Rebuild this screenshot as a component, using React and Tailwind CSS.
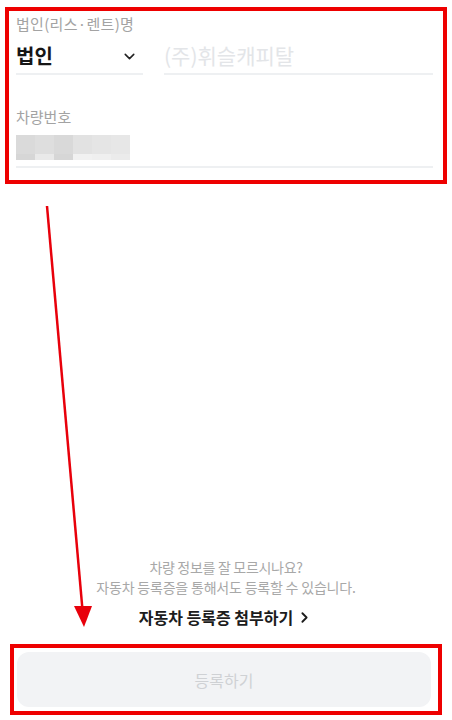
import { ChevronDown, ChevronRight } from "lucide-react";

const blurTop = ["#dadada", "#dedede", "#d9d9d9", "#e2e2e2", "#e5e5e5", "#e7e7e7"];
const blurBottom = ["#d6d6d6", "#e9e9e9", "#d6d6d6", "#f1f1f1", "#efefef", "#ebebeb"];

function PlateBlur() {
  // pixelated mask over the plate number
  return (
    <div className="flex flex-col w-[114px] h-[25px] blur-[0.6px]">
      <div className="flex h-[19px]">
        {blurTop.map((c, i) => (
          <div key={i} className="flex-1" style={{ background: c }} />
        ))}
      </div>
      <div className="flex h-[6px]">
        {blurBottom.map((c, i) => (
          <div key={i} className="flex-1" style={{ background: c }} />
        ))}
      </div>
    </div>
  );
}

function Arrow() {
  return (
    <svg className="absolute left-0 top-0 pointer-events-none" width="452" height="720">
      <line x1="47" y1="206" x2="82.5" y2="610" stroke="#e8000b" strokeWidth="2.5" />
      <polygon points="74,606 92,606 84,627" fill="#e8000b" />
    </svg>
  );
}

export default function App() {
  return (
    <div className="relative w-[452px] h-[720px] bg-white flex flex-col font-['Noto_Sans_CJK_KR','Noto_Sans',sans-serif] overflow-hidden">
      {/* Form fields */}
      <div className="mt-[7px] mx-[5px] h-[177px] border-4 border-[#ee0000] pl-[7px] pr-[10px] pt-[3px]">
        <div className="text-[15px] leading-[20px] text-[#a3a3a3] tracking-[0.3px]">법인(리스·렌트)명</div>
        <div className="flex gap-[21px] mt-[5px]">
          <div className="w-[127px] h-[36px] flex items-center justify-between border-b-2 border-[#eef0f2]">
            <span className="text-[20px] font-bold text-[#161616]">법인</span>
            <ChevronDown className="w-[17px] h-[17px] text-[#222] mr-[5px]" strokeWidth={2.2} />
          </div>
          <div className="flex-1 h-[36px] flex items-center border-b-2 border-[#eef0f2]">
            <span className="text-[21px] text-[#e3e5e8]">(주)휘슬캐피탈</span>
          </div>
        </div>
        <div className="mt-[32px] text-[15px] leading-[20px] text-[#a3a3a3]">차량번호</div>
        <div className="mt-[8px] pb-[6px] border-b-2 border-[#eef0f2]">
          <PlateBlur />
        </div>
      </div>

      <div className="flex-1" />

      {/* Registration certificate hint */}
      <div className="flex flex-col items-center">
        <p className="text-[14px] leading-[20px] text-[#a8a8a8] tracking-[-0.3px]">차량 정보를 잘 모르시나요?</p>
        <p className="text-[14px] leading-[20px] text-[#a8a8a8] tracking-[-0.2px]">자동차 등록증을 통해서도 등록할 수 있습니다.</p>
        <button className="mt-[10px] flex items-center gap-[3px] text-[16px] leading-[20px] font-bold text-[#1c1c1c]">
          자동차 등록증 첨부하기
          <ChevronRight className="w-[17px] h-[17px]" strokeWidth={2.6} />
        </button>
      </div>

      {/* Submit */}
      <div className="mt-[17px] mb-[5px] mx-[10px] h-[71px] border-4 border-[#ee0000] pl-[3px] pr-[7px] py-[4px]">
        <button className="w-full h-full rounded-[12px] bg-[#f2f3f5] text-[16px] text-[#cfd1d4]">
          등록하기
        </button>
      </div>

      <Arrow />
    </div>
  );
}
